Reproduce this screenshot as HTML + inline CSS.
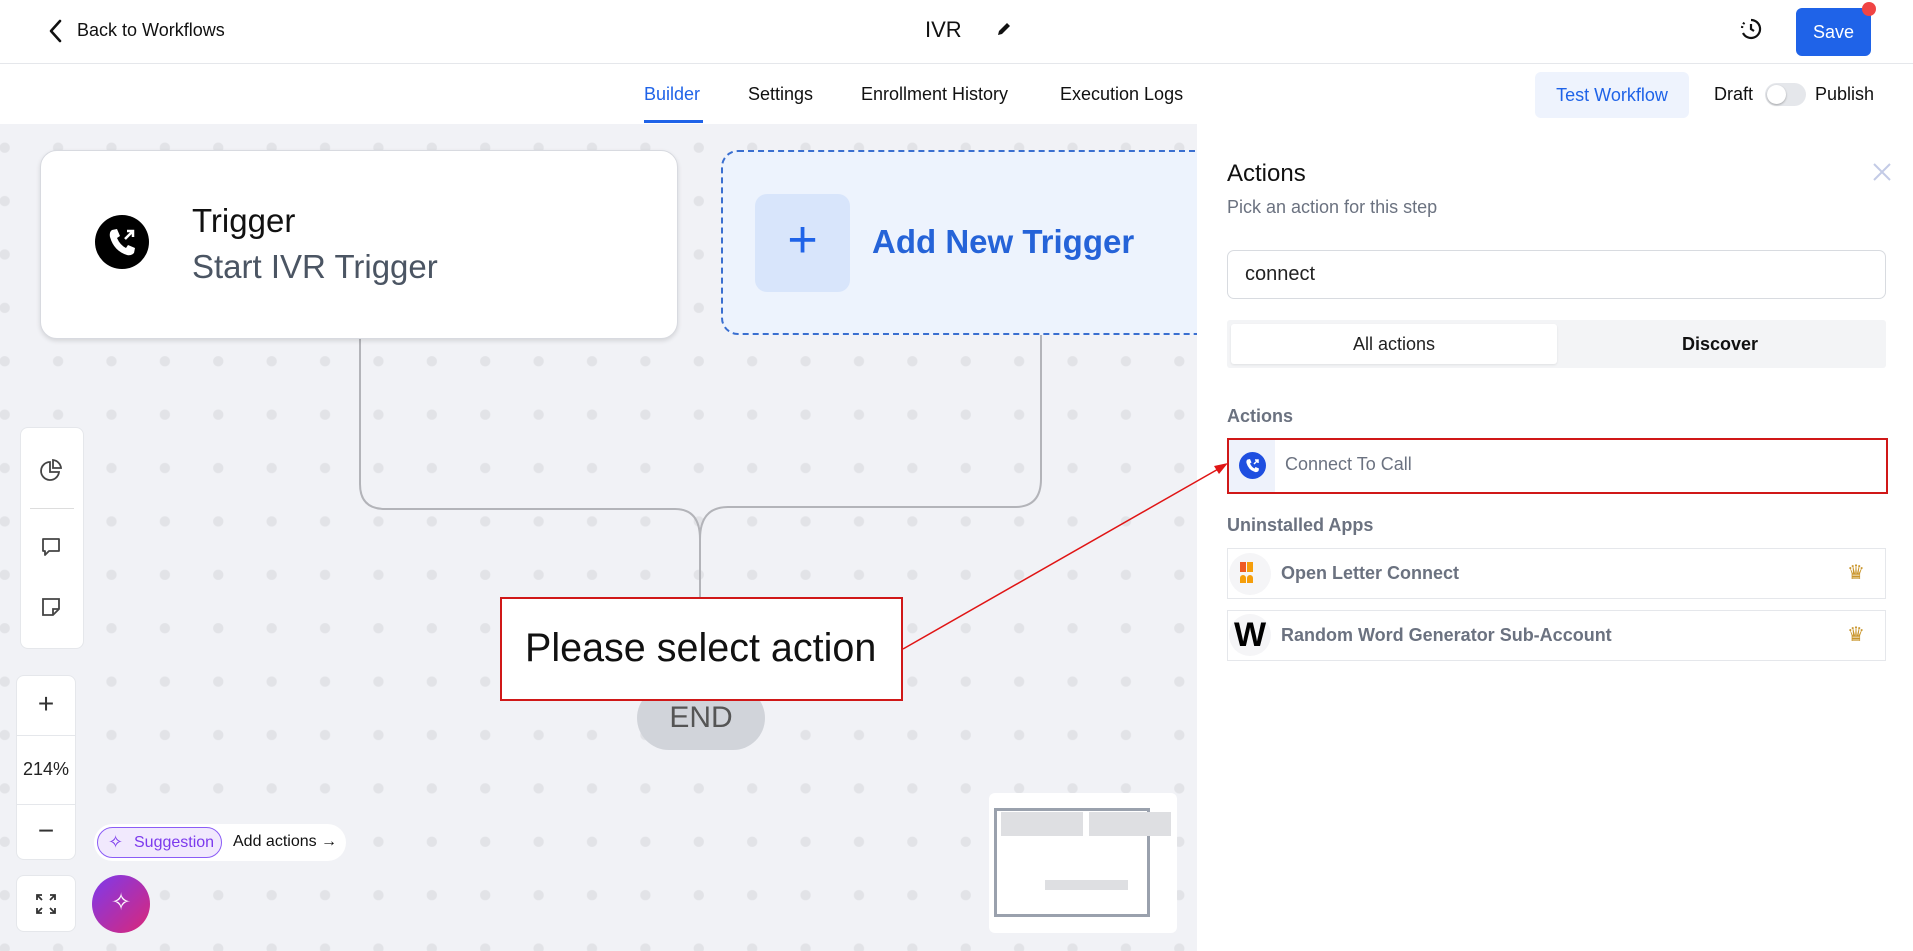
<!DOCTYPE html>
<html><head><meta charset="utf-8"><style>
*{box-sizing:border-box;margin:0;padding:0}
body{width:1913px;height:951px;overflow:hidden;font-family:"Liberation Sans",Arial,sans-serif;background:#fff;position:relative;color:#111}
.a{position:absolute}
.canvas{left:0;top:124px;width:1197px;height:827px;background-color:#f1f2f6;background-image:radial-gradient(circle,#e2e3e7 4.8px,transparent 5.5px);background-size:53.4px 53.4px;background-position:-22px -3px}
</style></head><body>
<!-- header -->
<svg class="a" style="left:46px;top:18px" width="20" height="26" viewBox="0 0 20 26"><path d="M14 3 L5 13 L14 23" fill="none" stroke="#111" stroke-width="2.6" stroke-linecap="round" stroke-linejoin="round"/></svg>
<div class="a" style="left:77px;top:20px;font-size:18px">Back to Workflows</div>
<div class="a" style="left:925px;top:17px;font-size:22px">IVR</div>
<svg class="a" style="left:996px;top:21px" width="16" height="16" viewBox="0 0 16 16"><path d="M2 14 L3 10 L11 2 L14 5 L6 13 Z" fill="#111"/></svg>
<svg class="a" style="left:1739px;top:17px" width="24" height="24" viewBox="0 0 24 24"><path d="M12 3 A9 9 0 1 1 4 16" fill="none" stroke="#111" stroke-width="2.2"/><path d="M12 7 V12 L15 14" fill="none" stroke="#111" stroke-width="2.2"/><path d="M3 11 A9 9 0 0 1 6 5" fill="none" stroke="#111" stroke-width="2.2" stroke-dasharray="2 2"/></svg>
<div class="a" style="left:1796px;top:8px;width:75px;height:48px;background:#1f63e8;border-radius:6px;color:#fff;font-size:18px;line-height:48px;text-align:center">Save</div>
<div class="a" style="left:1862px;top:2px;width:14px;height:14px;border-radius:50%;background:#f04444"></div>
<div class="a" style="left:0;top:63px;width:1913px;height:1px;background:#e5e7eb"></div>
<!-- tabs -->
<div class="a" style="left:644px;top:84px;font-size:18px;color:#1f63e8">Builder</div>
<div class="a" style="left:644px;top:120px;width:59px;height:3px;background:#1f63e8"></div>
<div class="a" style="left:748px;top:84px;font-size:18px">Settings</div>
<div class="a" style="left:861px;top:84px;font-size:18px">Enrollment History</div>
<div class="a" style="left:1060px;top:84px;font-size:18px">Execution Logs</div>
<div class="a" style="left:1535px;top:72px;width:154px;height:46px;background:#eef3fd;border-radius:6px;color:#1f63e8;font-size:18px;line-height:46px;text-align:center">Test Workflow</div>
<div class="a" style="left:1714px;top:84px;font-size:18px">Draft</div>
<div class="a" style="left:1765px;top:83px;width:41px;height:23px;border-radius:12px;background:#e5e7eb"><div style="position:absolute;left:2px;top:2px;width:19px;height:19px;border-radius:50%;background:#fff;box-shadow:0 1px 2px rgba(0,0,0,.3)"></div></div>
<div class="a" style="left:1815px;top:84px;font-size:18px">Publish</div>
<!-- canvas -->
<div class="a canvas"></div>
<svg class="a" style="left:0;top:124px" width="1197" height="827"><g fill="none" stroke="#b3b4b9" stroke-width="2"><path d="M360 210 V360 Q360 385 385 385 H675 Q700 385 700 415 V475"/><path d="M1041 210 V355 Q1041 383 1015 383 H728 Q700 383 700 415"/></g></svg>
<div class="a" style="left:40px;top:150px;width:638px;height:189px;background:#fff;border-radius:17px;border:1px solid #d8dae0;box-shadow:0 2px 5px rgba(0,0,0,.12)"></div>
<svg class="a" style="left:95px;top:215px" width="54" height="54" viewBox="0 0 54 54"><circle cx="27" cy="27" r="27" fill="#000"/><path d="M17 15 L22 14 L25 21 L22 23 Q25 30 31 33 L33 30 L40 33 L39 38 Q36 41 32 40 Q19 36 15 22 Q14 17 17 15Z" fill="#fff"/><path d="M30 24 L38 16 M32 16 H38 V22" fill="none" stroke="#fff" stroke-width="2.5"/></svg>
<div class="a" style="left:192px;top:202px;font-size:33px;color:#111">Trigger</div>
<div class="a" style="left:192px;top:248px;font-size:33px;color:#4b5563">Start IVR Trigger</div>
<div class="a" style="left:721px;top:150px;width:500px;height:185px;background:#edf3fd;border:2px dashed #3a6fd0;border-radius:17px"></div>
<div class="a" style="left:755px;top:194px;width:95px;height:98px;background:#d8e5fb;border-radius:12px;color:#1f63e8;font-size:52px;line-height:92px;text-align:center">+</div>
<div class="a" style="left:872px;top:223px;font-size:33px;font-weight:bold;color:#2563d8">Add New Trigger</div>
<div class="a" style="left:637px;top:686px;width:128px;height:64px;background:#d1d4da;border-radius:32px;color:#555;font-size:30px;line-height:64px;text-align:center">END</div>
<div class="a" style="left:500px;top:597px;width:403px;height:104px;background:#fff;border:2px solid #d01818;font-size:39.5px;line-height:98px;padding-left:23px">Please select action</div>
<!-- left tools -->
<div class="a" style="left:20px;top:427px;width:64px;height:222px;background:#fff;border-radius:8px;border:1px solid #e5e7eb"></div>
<svg class="a" style="left:38px;top:458px" width="26" height="26" viewBox="0 0 26 26" fill="none" stroke="#444" stroke-width="1.8"><path d="M12 4 A9 9 0 1 0 21 14 H12 Z"/><path d="M15 2 A9 9 0 0 1 23 10 H15 Z"/></svg>
<div class="a" style="left:30px;top:508px;width:44px;height:1px;background:#ddd"></div>
<svg class="a" style="left:39px;top:535px" width="24" height="24" viewBox="0 0 24 24" fill="none" stroke="#444" stroke-width="1.8"><path d="M4 4 H20 V16 H10 L6 20 V16 H4 Z" stroke-linejoin="round"/></svg>
<svg class="a" style="left:40px;top:596px" width="22" height="22" viewBox="0 0 22 22" fill="none" stroke="#444" stroke-width="1.8"><path d="M3 3 H19 V13 L13 19 H3 Z M13 19 V13 H19"/></svg>
<div class="a" style="left:16px;top:675px;width:60px;height:185px;background:#fff;border-radius:8px;border:1px solid #e5e7eb"></div>
<div class="a" style="left:16px;top:735px;width:60px;height:1px;background:#e5e7eb"></div>
<div class="a" style="left:16px;top:804px;width:60px;height:1px;background:#e5e7eb"></div>
<div class="a" style="left:16px;top:688px;width:60px;text-align:center;font-size:28px;color:#333">+</div>
<div class="a" style="left:16px;top:759px;width:60px;text-align:center;font-size:18px;color:#222">214%</div>
<div class="a" style="left:16px;top:815px;width:60px;text-align:center;font-size:28px;color:#333">−</div>
<div class="a" style="left:16px;top:875px;width:60px;height:57px;background:#fff;border-radius:8px;border:1px solid #e5e7eb"></div>
<svg class="a" style="left:34px;top:892px" width="24" height="24" viewBox="0 0 24 24" fill="none" stroke="#333" stroke-width="1.8"><path d="M3 8 V3 H8 M3 3 L8 8 M16 3 H21 V8 M21 3 L16 8 M3 16 V21 H8 M3 21 L8 16 M21 16 V21 H16 M21 21 L16 16"/></svg>
<div class="a" style="left:92px;top:875px;width:58px;height:58px;border-radius:50%;background:linear-gradient(135deg,#7c3aed,#db2777)"></div>
<div class="a" style="left:92px;top:888px;width:58px;text-align:center;color:#fff;font-size:24px">✧</div>
<div class="a" style="left:94px;top:824px;width:252px;height:37px;background:#fff;border-radius:19px"></div>
<div class="a" style="left:97px;top:827px;width:125px;height:31px;background:#f1e9fd;border:1px solid #8b5cf6;border-radius:16px;color:#7c3aed;font-size:16px;line-height:29px;padding-left:36px">Suggestion</div>
<div class="a" style="left:108px;top:832px;color:#7c3aed;font-size:18px">✧</div>
<div class="a" style="left:233px;top:833px;font-size:16px">Add actions →</div>
<div class="a" style="left:989px;top:793px;width:188px;height:140px;background:#fff;border-radius:6px"></div>
<div class="a" style="left:994px;top:808px;width:156px;height:109px;border:3px solid #9aa1ad"></div>
<div class="a" style="left:1001px;top:812px;width:82px;height:24px;background:#dedfe2"></div>
<div class="a" style="left:1089px;top:812px;width:82px;height:24px;background:#dedfe2"></div>
<div class="a" style="left:1045px;top:880px;width:83px;height:10px;background:#dedfe2"></div>
<!-- right panel -->
<div class="a" style="left:1197px;top:124px;width:716px;height:827px;background:#fff"></div>
<div class="a" style="left:1227px;top:160px;font-size:24px;color:#111">Actions</div>
<div class="a" style="left:1227px;top:197px;font-size:18px;color:#6b7280">Pick an action for this step</div>
<svg class="a" style="left:1872px;top:162px" width="20" height="20" viewBox="0 0 20 20" stroke="#c3cbe6" stroke-width="2"><path d="M2 2 L18 18 M18 2 L2 18"/></svg>
<div class="a" style="left:1227px;top:250px;width:659px;height:49px;border:1px solid #d8dbe0;border-radius:7px;font-size:20px;line-height:47px;padding-left:17px;color:#222">connect</div>
<div class="a" style="left:1227px;top:320px;width:659px;height:48px;background:#f3f4f6;border-radius:3px"></div>
<div class="a" style="left:1231px;top:324px;width:326px;height:40px;background:#fff;border-radius:3px;box-shadow:0 1px 2px rgba(0,0,0,.08);text-align:center;line-height:40px;font-size:18px;color:#222">All actions</div>
<div class="a" style="left:1557px;top:324px;width:326px;height:40px;text-align:center;line-height:40px;font-size:18px;font-weight:bold;color:#111">Discover</div>
<div class="a" style="left:1227px;top:406px;font-size:18px;font-weight:bold;color:#6b7280">Actions</div>
<div class="a" style="left:1227px;top:438px;width:661px;height:56px;border:2px solid #d01818;background:#fff"></div>
<div class="a" style="left:1229px;top:440px;width:46px;height:52px;background:#eef2fb"></div>
<svg class="a" style="left:1239px;top:452px" width="27" height="27" viewBox="0 0 54 54"><circle cx="27" cy="27" r="27" fill="#1f4fe0"/><path d="M17 15 L22 14 L25 21 L22 23 Q25 30 31 33 L33 30 L40 33 L39 38 Q36 41 32 40 Q19 36 15 22 Q14 17 17 15Z" fill="#fff"/><path d="M30 24 L38 16 M32 16 H38 V22" fill="none" stroke="#fff" stroke-width="3"/></svg>
<div class="a" style="left:1285px;top:454px;font-size:18px;color:#6b7280">Connect To Call</div>
<div class="a" style="left:1227px;top:515px;font-size:18px;font-weight:bold;color:#6b7280">Uninstalled Apps</div>
<div class="a" style="left:1227px;top:548px;width:659px;height:51px;border:1px solid #e5e7eb"></div>
<div class="a" style="left:1229px;top:553px;width:42px;height:42px;border-radius:50%;background:#f5f5f7"></div>
<div class="a" style="left:1240px;top:562px;width:6px;height:10px;background:#ef5a24"></div>
<div class="a" style="left:1247px;top:562px;width:6px;height:10px;background:#f59e0b"></div>
<div class="a" style="left:1240px;top:575px;width:6px;height:8px;background:#f59e0b;border-radius:3px 3px 0 0"></div>
<div class="a" style="left:1247px;top:575px;width:6px;height:8px;background:#f59e0b;border-radius:3px 3px 0 0"></div>
<div class="a" style="left:1281px;top:563px;font-size:18px;font-weight:bold;color:#6b7280">Open Letter Connect</div>
<div class="a" style="left:1847px;top:560px;font-size:20px;color:#c9952b">♛</div>
<div class="a" style="left:1227px;top:610px;width:659px;height:51px;border:1px solid #e5e7eb"></div>
<div class="a" style="left:1229px;top:614px;width:42px;height:42px;border-radius:50%;background:#f5f5f7;font-size:34px;font-weight:bold;line-height:42px;text-align:center;color:#000">W</div>
<div class="a" style="left:1281px;top:625px;font-size:18px;font-weight:bold;color:#6b7280">Random Word Generator Sub-Account</div>
<div class="a" style="left:1847px;top:622px;font-size:20px;color:#c9952b">♛</div>
<svg class="a" style="left:0;top:0" width="1913" height="951"><line x1="903" y1="649" x2="1220" y2="468" stroke="#e01515" stroke-width="1.5"/><path d="M1228 463 L1214 466 L1219 474 Z" fill="#e01515"/></svg>
</body></html>
